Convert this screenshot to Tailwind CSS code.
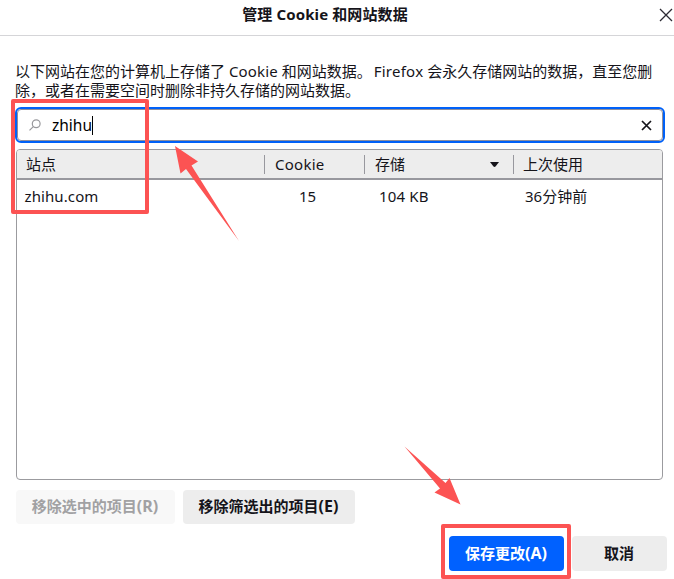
<!DOCTYPE html>
<html lang="zh-CN">
<head>
<meta charset="utf-8">
<title>管理 Cookie 和网站数据</title>
<script src="https://cdn.jsdelivr.net/npm/@tailwindcss/browser@4"></script>
</head>
<body class="relative h-[579px] w-[674px] overflow-hidden bg-white font-['Noto_Sans','Noto_Sans_CJK_SC',sans-serif] text-[15px] leading-[19px] text-[#15141a]">
<header class="flex h-9 items-center border-b border-[#d5d5d8] pb-[6px]">
  <h1 class="ml-[242px] w-[166px] text-center text-[15px] font-bold whitespace-nowrap tracking-[0.12px]">管理 Cookie 和网站数据</h1>
  <svg class="mt-[1px] ml-[251px] size-[14px]" viewBox="0 0 14 14" fill="none" stroke="#2b2a33" stroke-width="1.3"><path d="M1 1L13 13M13 1L1 13"/></svg>
</header>
<main class="flex flex-col pt-[26px]">
  <p class="ml-[15px] whitespace-nowrap">以下网站在您的计算机上存储了 <span class="tracking-[0.15px]">Cookie</span> 和网站数据。<span class="ml-[2px] tracking-[0.25px]">Firefox</span> 会永久存储网站的数据，直至您删<br>除，或者在需要空间时删除非持久存储的网站数据。</p>
  <div class="mt-[7px] ml-[15px] h-9 w-[650px] rounded-[6px] border-2 border-[#0061f8]">
    <div class="flex h-full items-center rounded-[4px] border border-[#8f8f9d]">
      <svg class="mb-px ml-[11px] size-3" viewBox="0 0 12 12" fill="none" stroke="#98989c" stroke-width="1.2"><circle cx="7.2" cy="4.7" r="3.9"/><path d="M4.3 7.6L.5 11.4"/></svg>
      <span class="ml-[11px] text-[15.5px] text-black">zhihu</span><span class="h-[19px] w-px bg-black"></span>
      <svg class="mr-[10px] ml-auto size-[11px]" viewBox="0 0 11 11" fill="none" stroke="#15141a" stroke-width="1.7"><path d="M1 1L10 10M10 1L1 10"/></svg>
    </div>
  </div>
  <section class="mt-[6px] ml-4 h-[331px] w-[647px] overflow-hidden rounded-[4px] border border-[#9b9b9f]">
    <div class="flex h-[30px] items-center border-b-2 border-[#98989e] bg-[#ededed]">
      <div class="w-[247px] pl-[9px]">站点</div>
      <div class="h-[19px] w-px bg-[#98989e]"></div>
      <div class="w-[99px] pl-[10px] tracking-[0.25px]">Cookie</div>
      <div class="h-[19px] w-px bg-[#98989e]"></div>
      <div class="flex w-[148px] items-center justify-between pr-[14px] pl-[10px]">存储<svg class="h-[5px] w-[9px]" viewBox="0 0 9 5"><path d="M0 0H9L5.5 4.5Q4.5 5.3 3.5 4.5Z" fill="#15141a"/></svg></div>
      <div class="h-[19px] w-px bg-[#98989e]"></div>
      <div class="pl-[9px]">上次使用</div>
    </div>
    <div class="flex h-[33px] items-center">
      <div class="w-[248px] pl-[7.5px] tracking-[0.1px]">zhihu.com</div>
      <div class="w-[100px] pl-[34px]">15</div>
      <div class="w-[149px] pl-[14px] tracking-[0.15px]">104 KB</div>
      <div class="pl-[11px]">36分钟前</div>
    </div>
  </section>
  <div class="mt-[10px] ml-4 flex gap-2 font-bold whitespace-nowrap">
    <button class="h-[34px] w-[159px] rounded-[4px] bg-[#f8f8f8] pr-px pb-[2px] text-[#a1a1a3]">移除选中的项目<span class="text-[16px]">(R)</span></button>
    <button class="h-[34px] w-[172px] rounded-[4px] bg-[#ededed] pr-px pb-[2px]">移除筛选出的项目<span class="text-[16px]">(E)</span></button>
  </div>
  <div class="mt-3 ml-[449px] flex gap-2 font-bold whitespace-nowrap">
    <button class="h-[35px] w-[115px] rounded-[4px] bg-[#0061ff] pr-px text-white">保存更改<span class="text-[16px]">(A)</span></button>
    <button class="h-[35px] w-[95px] rounded-[4px] bg-[#ededed] pr-px">取消</button>
  </div>
</main>
<!-- Callouts drawn over the dialog -->
<svg class="absolute inset-0 h-[579px] w-[674px]" viewBox="0 0 674 579">
  <g fill="none" stroke="#fc5353" stroke-width="4" stroke-linejoin="round">
    <rect x="13" y="101" width="134" height="111"/>
    <rect x="443" y="526" width="126" height="51"/>
  </g>
  <g fill="#fc5353">
    <path d="M175 146L198 161.500L191.500 165.500L239 241L186 169L180.500 173.500Z"/>
    <path d="M404.500 446.500L445.500 483L449.500 478L460.500 504.500L434.500 492.500L440 488.500Z"/>
  </g>
</svg>
</body>
</html>
